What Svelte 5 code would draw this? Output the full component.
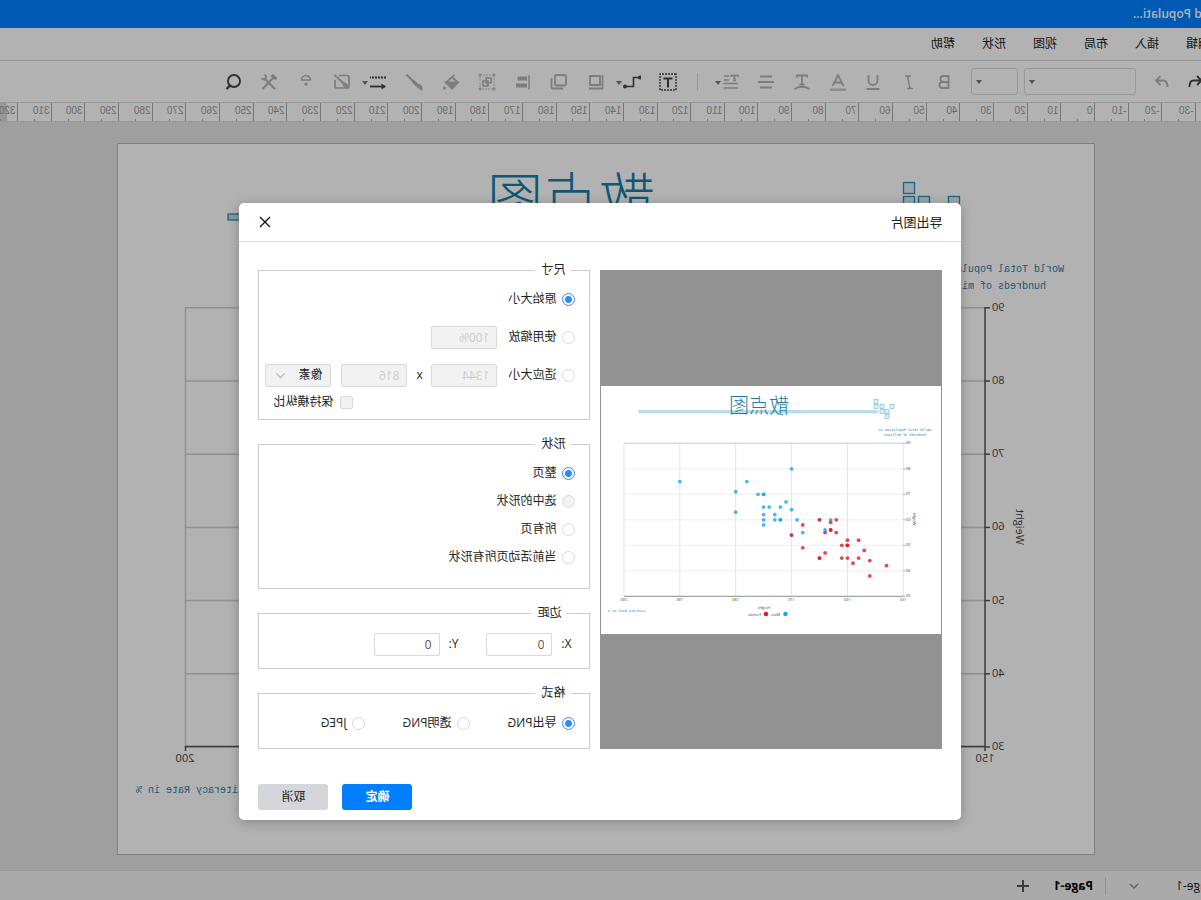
<script lang="ts">
	const menu = ['编辑', '插入', '布局', '视图', '形状', '帮助'];

	const formatTools = ['bold', 'italic', 'underline', 'color', 'curve', 'align', 'spacing'];
	const drawTools = ['text', 'connector', 'front', 'back', 'arrange', 'group', 'fill', 'line', 'arrows', 'crop', 'lock', 'tools', 'search'];
	const activeTools = ['undo', 'text', 'connector', 'arrows', 'search'];
	const withCaret = ['spacing', 'connector', 'arrows'];

	const rulerMarks = Array.from({ length: 37 }, (_, i) => (i - 4) * 10);
	const rulerX = (v: number) => Math.round(106 + v * 3.365) + 0.5;

	const weights = [30, 40, 50, 60, 70, 80, 90];
	const heights = [150, 160, 170, 180, 190, 200];
	const pageY = (w: number) => 747 - (w - 30) * 7.32;
	const prevX = (h: number) => 297.7 + (h - 150) * 5.587;
	const prevY = (w: number) => 596.3 - (w - 30) * 2.55;

	const male = [
		[170, 80], [190, 75], [178, 75], [180, 71], [176, 70], [175, 70], [175, 70], [171, 67], [170, 64],
		[175, 65], [174, 65], [172, 65], [180, 63], [175, 62], [173, 62], [175, 60], [173, 60], [172, 60],
		[172, 60], [169, 60], [175, 58], [168, 55], [164, 56], [163, 60], [165, 60], [170, 54]
	];
	const female = [
		[168, 58], [165, 60], [162, 60], [163, 59], [170, 54], [164, 55], [163, 56], [163, 56], [162, 55],
		[168, 49], [164, 47], [165, 45], [165, 45], [160, 52], [158, 52], [161, 50], [160, 50], [160, 50],
		[157, 48], [161, 45], [160, 45], [158, 45], [159, 43], [156, 44], [153, 42], [156, 38]
	];
	const pageSquares = [[286, 182], [286, 196], [271, 196], [241, 196]];
	const previewSquares = [[325, 401], [325, 406], [319, 406], [309, 406], [319, 411], [314, 411], [314, 416]];

	let size = $state('original');
	let shape = $state('page');
	let format = $state('png');
	let marginX = $state('0');
	let marginY = $state('0');
</script>

{#snippet icon(name: string)}
	<svg width="18" height="18" viewBox="0 0 18 18" fill="none" stroke="currentColor" stroke-width="1.8">
		{#if name === 'undo'}
			<path d="M7 3 2.5 7.5 7 12M3 7.5h7.500q4 0 4 6.500" />
		{:else if name === 'redo'}
			<path d="M10.500 3 15 7.500 10.500 12M14.500 7.500H8q-4.500 0-4.500 6.500" />
		{:else if name === 'bold'}
			<path d="M4.500 3h5a3 3 0 0 1 0 6h-5zM4.500 9h6a3 3 0 0 1 0 6h-6z" />
		{:else if name === 'italic'}
			<path d="M7 3h6M5 15.500h6M10.500 3 8 15.500" stroke-width="1.500" />
		{:else if name === 'underline'}
			<path d="M4.500 2v5.500a4.500 4.500 0 0 0 9 0V2" /><path d="M2.500 16h13" stroke-width="2" />
		{:else if name === 'color'}
			<path d="M3.500 13 9 2l5.500 11M5.500 9.500h7" /><path d="M1 17h16" stroke-width="3" opacity=".7" />
		{:else if name === 'curve'}
			<path d="M4 4.500V2.500h10v2M9 2.500v9M6.500 11.500h5" /><path d="M1.500 16q7.500-4.500 15 0" />
		{:else if name === 'align'}
			<path d="M3 3.500h12M1 9h16M3 14.500h12" />
		{:else if name === 'spacing'}
			<path d="M9 4V2.500H2V4M5.500 2.500v5M4 7.500h3M11 3h5M11 7h5M2 10.500h14.500M2 15h14.500" stroke-width="1.700" />
		{:else if name === 'text'}
			<path d="M1 1h16v16H1z" stroke-width="1.400" stroke-dasharray="2 1" /><path d="M4.500 5.500h9M9 5.500v9" stroke-width="2" />
		{:else if name === 'connector'}
			<path d="M0 4.500h7.500v9H16" stroke-width="1.600" /><circle cx="1" cy="4.500" r="2" fill="currentColor" stroke="none" /><circle cx="16" cy="13.500" r="2" fill="currentColor" stroke="none" />
		{:else if name === 'front'}
			<path d="M4 3h10v9H4zM1.500 2v13.500H15" />
		{:else if name === 'back'}
			<rect x="2" y="2" width="11" height="10.500" rx="1.500" /><path d="M5 15.500h10q1.500 0 1.500-1.500V5" />
		{:else if name === 'arrange'}
			<path d="M3 2v14.500" stroke-width="1.500" /><path d="M5 5.500h9.500M5 12.500h11" stroke-width="4" />
		{:else if name === 'group'}
			<path d="M2 2h14v14H2z" stroke-width=".8" stroke-dasharray="2 1" /><path d="M5 5h5v5H5zM8 8h5v5H8z" stroke-width="1.600" /><path d="M1 1h2v2H1zM15 1h2v2h-2zM1 15h2v2H1zM15 15h2v2h-2z" stroke-width=".9" />
		{:else if name === 'fill'}
			<path d="M5.500 2 14 9.500l-6 6-6-6 5.500-5" /><path d="M2.500 9.500H14l-6 6z" fill="currentColor" /><circle cx="15.500" cy="15" r="1.500" fill="currentColor" stroke="none" />
		{:else if name === 'line'}
			<path d="M16.500 1.500 5.500 12.500" stroke-width="2.200" /><path d="M10 8 5.500 12.500" stroke-width="3.200" /><path d="M1.500 16.500q-.5-4 3-4.500 2.500 2-3 4.500z" fill="currentColor" />
		{:else if name === 'arrows'}
			<path d="M1 4.500h16" stroke-dasharray="2 1" /><path d="M2 13.500h15" /><path d="M5.500 10.500v6L1 13.500z" fill="currentColor" stroke="none" />
		{:else if name === 'crop'}
			<path d="M12 2.500H4q-2 0-2 2V13q0 2 2 2h10q2 0 2-2V7M16.500 2 5 12.500" stroke-width="1.700" /><path d="M4 14.500q-.5-3.500 3-4.500 2 3-3 4.500z" fill="currentColor" />
		{:else if name === 'lock'}
			<path d="M4.500 7a4.500 4.500 0 0 1 9 0z" stroke-width="1.700" /><circle cx="9" cy="11" r="1.600" fill="currentColor" stroke="none" />
		{:else if name === 'tools'}
			<path d="m4 4 11.500 12M13 6 3 16" stroke-width="2.200" /><path d="M1.500 6 6.500 2" stroke-width="3.200" /><path d="M13.500 2q-2.500 1-1 3.500 2 2 4-.5" stroke-width="2" />
		{:else if name === 'search'}
			<circle cx="8" cy="8" r="6" stroke-width="1.900" /><path d="m12 12.500 3.500 3.500" stroke-width="2.400" />
		{/if}
	</svg>
{/snippet}

{#snippet tool(name: string)}
	<button class="tool" class:active={activeTools.includes(name)} aria-label={name}>
		{@render icon(name)}
		{#if withCaret.includes(name)}<i class="caret"></i>{/if}
	</button>
{/snippet}

<div class="app">
	<header class="titlebar"><span>World Populati...</span></header>

	<nav class="menu">
		{#each menu as item}
			<a href="#menu">{item}</a>
		{/each}
	</nav>

	<div class="toolbar">
		<div class="history">
			{@render tool('undo')}
			{@render tool('redo')}
		</div>
		<div class="picker font"><select aria-label="font"></select><i class="caret"></i></div>
		<div class="picker"><select aria-label="font size"></select><i class="caret"></i></div>
		<div class="tools format">
			{#each formatTools as name}{@render tool(name)}{/each}
		</div>
		<div class="divider"></div>
		<div class="tools draw">
			{#each drawTools as name}{@render tool(name)}{/each}
		</div>
	</div>

	<div class="ruler">
		<svg width="100%" height="18">
			<rect x="1194" width="20" height="18" fill="#dadada" />
			{#each rulerMarks as mark}
				<path d="M{rulerX(mark)} 0V18M{rulerX(mark + 5)} 16V18" stroke="#aaa" />
				<text x={rulerX(mark) + 2} y="11" font-weight={mark === 0 ? 700 : 400}>{mark}</text>
			{/each}
		</svg>
	</div>

	<main class="canvas">
		<svg class="page" width="978" height="712" viewBox="106 143 978 712">
			<rect x="106.500" y="143.500" width="977" height="711" fill="#fff" stroke="#b7b7b7" />
			<g fill="#e0ebf0" stroke="#2d8fb5" stroke-width="1.300">
				{#each pageSquares as [x, y]}
					<rect x={x + 0.5} y={y + 0.5} width="11" height="11" />
				{/each}
				<rect x="298" y="214" width="675" height="6" fill="#c4dde7" />
			</g>
			<text class="heading" x="546" y="219" font-size="56">散点图</text>
			<g class="note" font-size="10">
				<text x="137" y="272">World Total Population in</text>
				<text x="155" y="289">hundreds of millions</text>
				<text x="1065" y="793" text-anchor="end">Literacy Rate in %</text>
			</g>
			{#each weights as w}
				<path d="M216 {pageY(w)}H1016" stroke="#d0d0d0" stroke-width="1.500" />
				<path d="M211 {pageY(w)}h5" stroke="#555" stroke-width="1.500" />
				<text class="axis" x="209" y={pageY(w) + 3} text-anchor="end" font-size="11">{w}</text>
			{/each}
			<path d="M1015.500 307V747" stroke="#d0d0d0" stroke-width="1.500" />
			<path d="M216 307V751M216 746.500H1016M1015.500 746v5" fill="none" stroke="#555" stroke-width="1.500" />
			<text class="axis" x="216" y="762" text-anchor="middle" font-size="11">150</text>
			<text class="axis" x="1016" y="762" text-anchor="middle" font-size="11">200</text>
			<text class="axis" transform="translate(185 527) rotate(-90)" text-anchor="middle" font-size="11">Weight</text>
		</svg>
	</main>

	<footer class="pages">
		<span class="page-name">Page-1</span>
		<svg width="10" height="6" viewBox="0 0 10 6" fill="none" stroke="#8a8f99" stroke-width="1.500"><path d="m1 1 4 4 4-4" /></svg>
		<span class="split"></span>
		<a class="page-tab" href="#page-1">Page-1</a>
		<button class="add" aria-label="add page">
			<svg width="12" height="12" viewBox="0 0 12 12" stroke="#555" stroke-width="2"><path d="M6 0v12M0 6h12" /></svg>
		</button>
	</footer>

	<div class="mask">
		<div class="dialog" role="dialog" aria-labelledby="export-title">
			<div class="dialog-head">
				<h2 id="export-title">导出图片</h2>
				<button class="close" aria-label="关闭">
					<svg width="12" height="12" viewBox="0 0 12 12" stroke="#111" stroke-width="1.300"><path d="m1 1 10 10M11 1 1 11" /></svg>
				</button>
			</div>

			<div class="dialog-body">
				<div class="preview">
					<svg width="340" height="248" viewBox="260 386 340 248">
						<rect x="260" y="386" width="340" height="248" fill="#fff" />
						<rect x="323.500" y="410.500" width="238.500" height="2.500" fill="#bddfec" stroke="#9fcde0" stroke-width=".5" />
						{#each previewSquares as [x, y]}
							<rect x={x - 2} y={y - 1.5} width="4" height="4" fill="#e2f0f6" stroke="#8fc4da" stroke-width=".8" />
						{/each}
						<text class="heading" x="412" y="413" font-size="20">散点图</text>
						<g class="note" font-size="3.500">
							<text x="270" y="431">World Total Population in</text>
							<text x="275" y="436">hundreds of millions</text>
							<text x="593" y="612" text-anchor="end">Literacy Rate in %</text>
						</g>
						{#each heights as h}
							<path d="M{prevX(h)} 443V596" stroke="#e2e2e2" stroke-width=".9" />
							<text class="axis" x={prevX(h)} y="601" text-anchor="middle" font-size="4">{h}</text>
						{/each}
						{#each weights as w}
							<path d="M{prevX(150)} {prevY(w)}H{prevX(200)}" stroke="#e8e8e8" stroke-width=".7" />
							<path d="M{prevX(150) - 2} {prevY(w)}h2" stroke="#888" stroke-width=".7" />
							<text class="axis" x="295" y={prevY(w) + 1} text-anchor="end" font-size="4">{w}</text>
						{/each}
						<path d="M{prevX(150)} 443.300H{prevX(200)}" stroke="#ccc" stroke-width=".9" />
						<path d="M{prevX(150)} 596.300H{prevX(200)}" stroke="#888" stroke-width=".9" />
						<g fill="#1ba7e5" fill-opacity=".8">
							{#each male as [h, w]}<circle cx={prevX(h)} cy={prevY(w)} r="1.900" />{/each}
						</g>
						<g fill="#dc1a28" fill-opacity=".8">
							{#each female as [h, w]}<circle cx={prevX(h)} cy={prevY(w)} r="1.900" />{/each}
						</g>
						<text class="axis" x="437" y="609" text-anchor="middle" font-size="4">Height</text>
						<text class="axis" transform="translate(288 519) rotate(-90)" text-anchor="middle" font-size="4">Weight</text>
						<circle cx="415.500" cy="614" r="2.300" fill="#1ba7e5" />
						<text class="axis" x="421" y="615.500" font-size="4">Male</text>
						<circle cx="435" cy="614" r="2.300" fill="#dc1a28" />
						<text class="axis" x="440" y="615.500" font-size="4">Female</text>
					</svg>
				</div>

				<form class="options">
					<fieldset class="size">
						<legend>尺寸</legend>
						<div class="row">
							<label><input type="radio" value="original" bind:group={size} />原始大小</label>
						</div>
						<div class="row">
							<label><input type="radio" value="scale" bind:group={size} />使用缩放</label>
							<input class="box first" type="text" value="100%" aria-label="缩放" disabled />
						</div>
						<div class="fit">
							<div class="row">
								<label><input type="radio" value="fit" bind:group={size} />适应大小</label>
								<input class="box first" type="text" value="1344" aria-label="宽" disabled />
								<span class="times">x</span>
								<input class="box" type="text" value="816" aria-label="高" disabled />
								<div class="unit">
									<select aria-label="单位" disabled><option>像素</option></select>
									<svg width="9" height="6" viewBox="0 0 9 6" fill="none" stroke="#bbb" stroke-width="1.300"><path d="m.5.500 4 4 4-4" /></svg>
								</div>
							</div>
							<div class="row ratio">
								<label><input type="checkbox" disabled />保持横纵比</label>
							</div>
						</div>
					</fieldset>

					<fieldset class="shape">
						<legend>形状</legend>
						<div class="row"><label><input type="radio" value="page" bind:group={shape} />整页</label></div>
						<div class="row"><label><input type="radio" value="selected" bind:group={shape} disabled />选中的形状</label></div>
						<div class="row"><label><input type="radio" value="all" bind:group={shape} />所有页</label></div>
						<div class="row"><label><input type="radio" value="active" bind:group={shape} />当前活动页所有形状</label></div>
					</fieldset>

					<fieldset class="margin">
						<legend>边距</legend>
						<div class="row">
							<label class="offset">X:<input class="box" type="text" bind:value={marginX} /></label>
							<label class="offset">Y:<input class="box" type="text" bind:value={marginY} /></label>
						</div>
					</fieldset>

					<fieldset class="format-set">
						<legend>格式</legend>
						<div class="row formats">
							<label><input type="radio" value="png" bind:group={format} />导出PNG</label>
							<label><input type="radio" value="alpha" bind:group={format} />透明PNG</label>
							<label><input type="radio" value="jpeg" bind:group={format} />JPEG</label>
						</div>
					</fieldset>
				</form>
			</div>

			<div class="dialog-foot">
				<button class="btn primary">确定</button>
				<button class="btn">取消</button>
			</div>
		</div>
	</div>
</div>

<style>
	:global(body) { margin: 0; }
	.app { position: relative; display: flex; flex-direction: column; height: 100vh; overflow: hidden; transform: scaleX(-1); font: 12px/16px "Open Sans", "Noto Sans CJK SC", sans-serif; color: #222; background: #fff; }
	.app * { box-sizing: border-box; }
	button { background: none; border: none; padding: 0; font: inherit; color: inherit; cursor: pointer; }
	a { color: inherit; text-decoration: none; }
	select, input { font: inherit; color: inherit; margin: 0; appearance: none; }

	.titlebar { flex: none; height: 28px; background: #0080ff; color: #fff; font-weight: 600; display: flex; align-items: center; }
	.titlebar span { width: 68px; display: flex; justify-content: flex-end; white-space: nowrap; }
	.menu { flex: none; height: 33px; display: flex; align-items: center; gap: 27px; margin-left: -9px; border-bottom: 1px solid #dadada; }

	.toolbar { flex: none; height: 42px; display: flex; align-items: center; border-bottom: 1px solid #dadada; }
	.history { display: flex; gap: 15px; margin-left: -3px; width: 68px; }
	.tool { position: relative; display: flex; justify-content: center; align-items: center; color: #b4b4b4; }
	.tool.active { color: #444; }
	.caret { position: absolute; border: 3px solid transparent; border-top: 4px solid #777; border-bottom: 0; pointer-events: none; }
	.tool .caret { right: 2px; top: 8px; }
	.picker { position: relative; width: 47px; margin-right: 6px; }
	.picker.font { width: 112px; }
	.picker select { display: block; width: 100%; height: 27px; border: 1px solid #dadada; border-radius: 3px; background: #fff; }
	.picker .caret { right: 5px; top: 12px; }
	.tools { display: grid; grid-auto-flow: column; grid-auto-columns: 1fr; }
	.format { width: 249px; margin-left: 3px; }
	.divider { width: 1px; height: 18px; background: #dadada; margin: 0 11px 0 15px; }
	.draw { width: 471px; }

	.ruler { flex: none; height: 19px; border-bottom: 1px solid #dadada; overflow: hidden; }
	.ruler svg { display: block; }
	.ruler text { font: 10px "Liberation Sans", sans-serif; fill: #999; }
	.canvas { flex: 1; min-height: 0; background: #e4e4e4; overflow: hidden; }
	.page { display: block; margin: 21px 0 0 106px; }
	.heading { fill: #147fa8; font-family: "Noto Sans CJK SC", sans-serif; font-weight: 300; }
	.note { fill: #1f7fa6; font-family: "Liberation Mono", monospace; }
	.axis { fill: #444; }

	.pages { flex: none; height: 30px; display: flex; align-items: center; border-top: 1px solid #dadada; background: #f4f4f4; white-space: nowrap; }
	.page-name { display: flex; justify-content: flex-end; width: 25px; margin-right: 37px; }
	.split { width: 1px; height: 18px; background: #d0d0d0; margin: 0 12px 0 23px; }
	.page-tab { font-weight: 700; color: #000; margin-right: 25px; }
	.add { display: flex; }

	.mask { position: absolute; inset: 0; display: flex; justify-content: center; align-items: flex-start; padding-top: 203px; background: rgba(0, 0, 0, 0.3); }
	.dialog { width: 722px; background: #fff; border-radius: 5px; box-shadow: 0 2px 12px rgba(0, 0, 0, 0.25); }
	.dialog-head { display: flex; justify-content: space-between; align-items: center; height: 39px; padding: 0 20px 0 19px; border-bottom: 1px solid #dcdcdc; }
	.dialog-head h2 { margin: 0; font-size: 13px; font-weight: 400; }
	.close { display: flex; }
	.dialog-body { display: flex; gap: 10px; padding: 20px 19px 0; }
	.preview { flex: 1; display: flex; justify-content: center; align-items: center; margin-top: 8px; background: #929292; }
	.options { width: 332px; display: flex; flex-direction: column; gap: 16px; }
	fieldset { margin: 0; min-width: 0; border: 1px solid #ccc; padding: 10px 6px 6px 14px; }
	legend { margin-left: 4px; padding: 0 6px; }
	.row { display: flex; align-items: center; height: 22px; }
	.row + .row { margin-top: 6px; }
	.size .row { margin: 0 0 16px; }
	.size .fit .row { margin: 0; }
	.size .fit .ratio { justify-content: flex-end; margin-top: 5px; padding-right: 8px; }
	.shape { padding-bottom: 20px; }
	.margin { padding: 12px 6px 13px 18px; }
	.format-set { padding-top: 11px; padding-bottom: 14px; }
	label { display: flex; align-items: center; gap: 6px; white-space: nowrap; }
	.formats { display: grid; grid-template-columns: repeat(3, 105px); }
	.offset { gap: 9px; margin-right: 28px; }

	input[type='radio'], input[type='checkbox'] { flex: none; width: 13px; height: 13px; border: 1px solid #d8d9dd; border-radius: 50%; background: #fff; }
	input[type='checkbox'] { border-radius: 2px; }
	input[type='radio']:disabled, input[type='checkbox']:disabled { background: #f2f2f2; }
	input[type='radio']:checked { border-color: #2d8cf0; background: radial-gradient(circle, #2d8cf0 3px, #fff 4px); }
	.box { width: 66px; height: 23px; border: 1px solid #d8d9dd; border-radius: 2px; padding: 0 7px; color: #555; background: #fff; }
	.box:disabled { background: #f2f2f2; color: #ccc; }
	.box.first { margin-left: 11px; }
	.times { width: 24px; text-align: center; }
	.unit { position: relative; margin-left: 10px; }
	.unit select { display: block; width: 66px; height: 23px; border: 1px solid #d8d9dd; border-radius: 2px; padding: 0 8px; background: #f2f2f2; color: #222; opacity: 1; }
	.unit svg { position: absolute; right: 11px; top: 9px; }

	.dialog-foot { display: flex; justify-content: flex-end; gap: 14px; padding: 35px 19px 10px; }
	.btn { width: 70px; height: 26px; border-radius: 3px; background: #d5d6db; }
	.btn.primary { background: #0080ff; color: #fff; font-weight: 700; }
</style>
